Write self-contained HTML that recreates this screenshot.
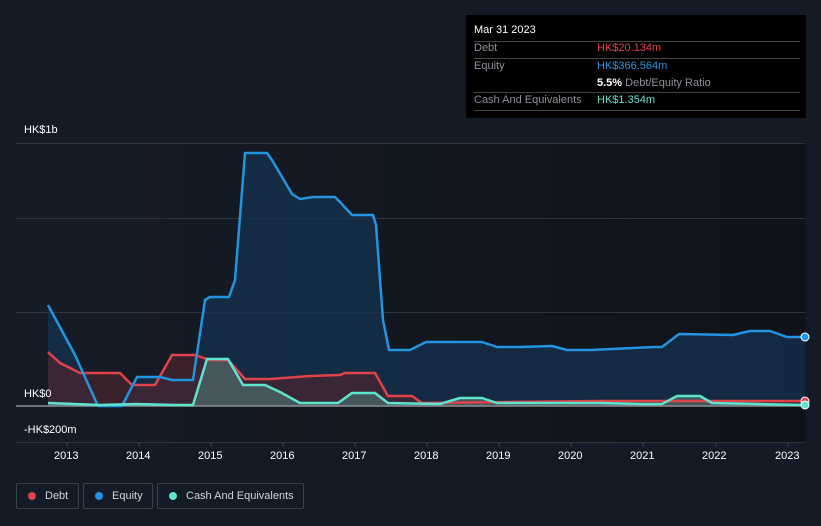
<!DOCTYPE html>
<html><head><meta charset="utf-8"><style>
body{margin:0;width:821px;height:526px;background:#151b26;overflow:hidden;font-family:"Liberation Sans",sans-serif;position:relative}
.t{position:absolute;font-size:11px;color:#fff}
.tip{position:absolute;left:466px;top:15px;width:340px;height:103px;background:#000}
.tip .r{position:absolute;left:8px;width:326px;border-top:1px solid #444}
.tip span{position:absolute;font-size:11px}
.lg{position:absolute;top:483px;height:26px;border:1px solid #3a404b;border-radius:2px;box-sizing:border-box;color:#cfd3da;font-size:11px;line-height:24px}
.lg i{position:absolute;left:11px;top:8px;width:8px;height:8px;border-radius:50%}
</style></head><body>
<svg width="821" height="526" style="position:absolute;left:0;top:0">
<defs><linearGradient id="bg" x1="0" x2="1"><stop offset="0" stop-color="#161c27"/><stop offset="1" stop-color="#0f1319"/></linearGradient></defs>
<rect x="16" y="143" width="789" height="300" fill="url(#bg)"/>
<g stroke="#2f343c" stroke-width="1"><line x1="16" y1="143.5" x2="805" y2="143.5"/><line x1="16" y1="218.5" x2="805" y2="218.5"/><line x1="16" y1="312.5" x2="805" y2="312.5"/><line x1="16" y1="442.5" x2="805" y2="442.5"/></g>
<g stroke="#3a404b"><line x1="67" y1="443" x2="67" y2="447"/><line x1="139" y1="443" x2="139" y2="447"/><line x1="211" y1="443" x2="211" y2="447"/><line x1="283" y1="443" x2="283" y2="447"/><line x1="355" y1="443" x2="355" y2="447"/><line x1="427" y1="443" x2="427" y2="447"/><line x1="499" y1="443" x2="499" y2="447"/><line x1="571" y1="443" x2="571" y2="447"/><line x1="643" y1="443" x2="643" y2="447"/><line x1="716" y1="443" x2="716" y2="447"/><line x1="788" y1="443" x2="788" y2="447"/></g>
<path d="M48,305 L75,355 98,406 122,406 137,377 160,377 172,380 193,380 205,300 210,297 229,297 235,280 245,153 267,153 272,160 292,194 300,199 313,197 335,197 340,202 352,215 373,215 376,225 383,320 389,350 410,350 426,342 482,342 497,347 520,347 552,346 567,350 590,350 655,347 662,347 679,334 733,335 750,331 770,331 787,337 805,337 L805,406 48,406Z" fill="#163150" fill-opacity="0.75"/>
<path d="M48,352 L60,363 80,373 120,373 132,385 155,385 172,355 195,355 210,360 228,360 245,379 270,379 310,376 340,375 345,373 375,373 388,396 412,396 422,403 600,401 750,401 805,401 L805,406 48,406Z" fill="#4a2530" fill-opacity="0.7"/>
<path d="M48,403 L100,405 135,404 175,405 193,405 207,359 228,359 243,385 265,385 280,392 300,403 338,403 352,393 375,393 388,403 440,404 460,398 482,398 497,403 600,403 640,404 662,404 677,396 700,396 712,403 805,405 L805,406 48,406Z" fill="#4a6466" fill-opacity="0.8"/>
<line x1="16" y1="406" x2="805" y2="406" stroke="#8a8d92" stroke-width="1.5"/>
<path d="M48,352 L60,363 80,373 120,373 132,385 155,385 172,355 195,355 210,360 228,360 245,379 270,379 310,376 340,375 345,373 375,373 388,396 412,396 422,403 600,401 750,401 805,401" fill="none" stroke="#e0424a" stroke-width="2.5" stroke-linejoin="round"/>
<path d="M48,305 L75,355 98,406 122,406 137,377 160,377 172,380 193,380 205,300 210,297 229,297 235,280 245,153 267,153 272,160 292,194 300,199 313,197 335,197 340,202 352,215 373,215 376,225 383,320 389,350 410,350 426,342 482,342 497,347 520,347 552,346 567,350 590,350 655,347 662,347 679,334 733,335 750,331 770,331 787,337 805,337" fill="none" stroke="#2394e0" stroke-width="2.5" stroke-linejoin="round"/>
<path d="M48,403 L100,405 135,404 175,405 193,405 207,359 228,359 243,385 265,385 280,392 300,403 338,403 352,393 375,393 388,403 440,404 460,398 482,398 497,403 600,403 640,404 662,404 677,396 700,396 712,403 805,405" fill="none" stroke="#5ee3cd" stroke-width="2.5" stroke-linejoin="round"/>
<circle cx="805" cy="337" r="4" fill="#2394e0" stroke="#fff" stroke-width="1"/>
<circle cx="805" cy="401" r="4" fill="#e0424a" stroke="#fff" stroke-width="1"/>
<circle cx="805" cy="405" r="4" fill="#5ee3cd" stroke="#fff" stroke-width="1"/>
</svg>
<div class="t" style="left:24px;top:124px">HK$1b</div>
<div class="t" style="left:24px;top:388px">HK$0</div>
<div class="t" style="left:24px;top:424px">-HK$200m</div>
<div class="t" style="left:54px;top:450px">2013</div><div class="t" style="left:126px;top:450px">2014</div><div class="t" style="left:198px;top:450px">2015</div><div class="t" style="left:270px;top:450px">2016</div><div class="t" style="left:342px;top:450px">2017</div><div class="t" style="left:414px;top:450px">2018</div><div class="t" style="left:486px;top:450px">2019</div><div class="t" style="left:558px;top:450px">2020</div><div class="t" style="left:630px;top:450px">2021</div><div class="t" style="left:702px;top:450px">2022</div><div class="t" style="left:775px;top:450px">2023</div>
<div class="tip">
<span style="left:8px;top:9px;color:#fff">Mar 31 2023</span>
<div class="r" style="top:26px"></div>
<span style="left:8px;top:27px;color:#8d9199">Debt</span><span style="left:131px;top:27px;color:#e8414a">HK$20.134m</span>
<div class="r" style="top:43px"></div>
<span style="left:8px;top:45px;color:#8d9199">Equity</span><span style="left:131px;top:45px;color:#2394e0">HK$366.564m</span>
<span style="left:131px;top:62px;color:#8d9199"><b style="color:#fff">5.5%</b> Debt/Equity Ratio</span>
<div class="r" style="top:77px"></div>
<span style="left:8px;top:79px;color:#8d9199">Cash And Equivalents</span><span style="left:131px;top:79px;color:#5ee3cd">HK$1.354m</span>
<div class="r" style="top:95px"></div>
</div>
<div class="lg" style="left:16px;width:63px"><i style="background:#e0424a"></i><span style="position:absolute;left:28px">Debt</span></div>
<div class="lg" style="left:83px;width:70px"><i style="background:#2394e0"></i><span style="position:absolute;left:28px">Equity</span></div>
<div class="lg" style="left:157px;width:147px"><i style="background:#5ee3cd"></i><span style="position:absolute;left:28px">Cash And Equivalents</span></div>
</body></html>
